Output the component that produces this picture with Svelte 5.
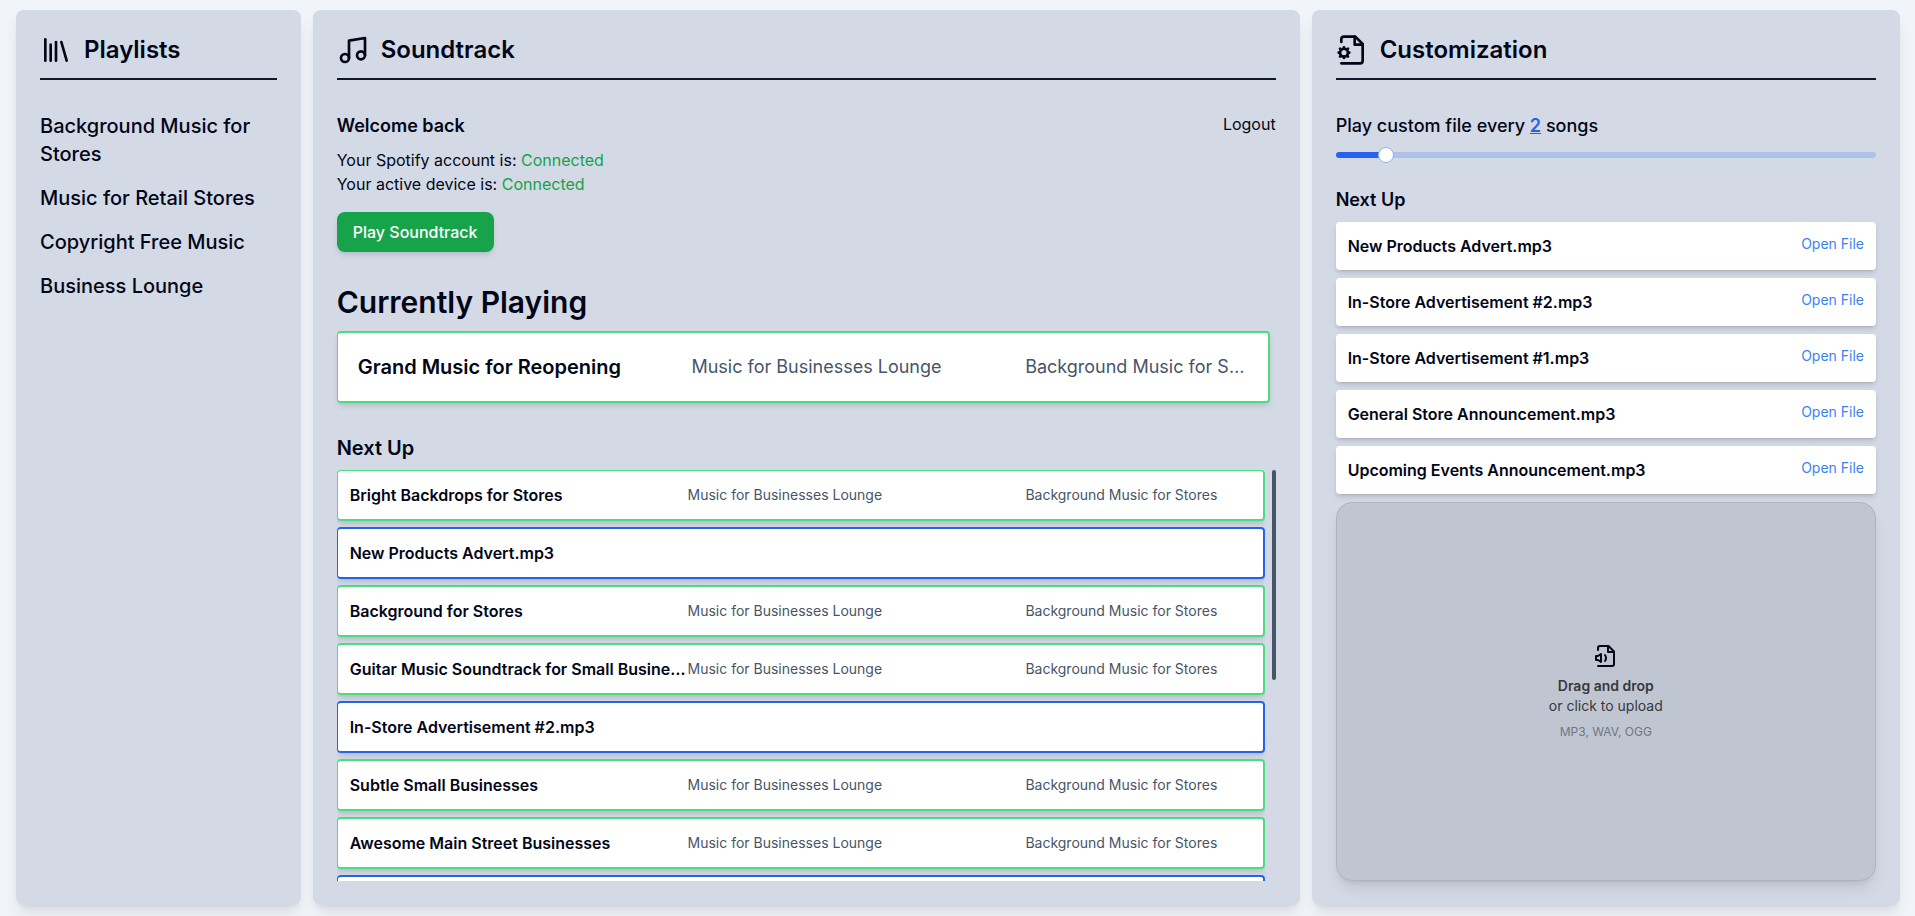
<script>
  const playlists = [
    'Background Music for Stores',
    'Music for Retail Stores',
    'Copyright Free Music',
    'Business Lounge'
  ];

  const artist = 'Music for Businesses Lounge';
  const album = 'Background Music for Stores';

  // custom entries are the uploaded files mixed into the soundtrack
  const queue = [
    { title: 'Bright Backdrops for Stores' },
    { title: 'New Products Advert.mp3', custom: true },
    { title: 'Background for Stores' },
    { title: 'Guitar Music Soundtrack for Small Businesses' },
    { title: 'In-Store Advertisement #2.mp3', custom: true },
    { title: 'Subtle Small Businesses' },
    { title: 'Awesome Main Street Businesses' },
    { title: '', custom: true }
  ];

  const files = [
    'New Products Advert.mp3',
    'In-Store Advertisement #2.mp3',
    'In-Store Advertisement #1.mp3',
    'General Store Announcement.mp3',
    'Upcoming Events Announcement.mp3'
  ];

  const max = 25;
  let every = $state(2);
  let fill = $derived((every / max) * 100);
</script>

<main>
  <section class="panel">
    <header>
      <svg class="icon" viewBox="0 0 24 24" aria-hidden="true">
        <path d="m16 6 4 14" />
        <path d="M12 6v14" />
        <path d="M8 8v12" />
        <path d="M4 4v16" />
      </svg>
      <h2>Playlists</h2>
    </header>
    <nav class="playlists">
      {#each playlists as playlist}
        <a href="#playlist">{playlist}</a>
      {/each}
    </nav>
  </section>

  <section class="panel">
    <header>
      <svg class="icon" viewBox="0 0 24 24" aria-hidden="true">
        <path d="M9 18V5l12-2v13" />
        <circle cx="6" cy="18" r="3" />
        <circle cx="18" cy="16" r="3" />
      </svg>
      <h2>Soundtrack</h2>
    </header>

    <div class="account">
      <div>
        <h3>Welcome back</h3>
        <p>Your Spotify account is: <span class="ok">Connected</span></p>
        <p>Your active device is: <span class="ok">Connected</span></p>
      </div>
      <button class="logout">Logout</button>
    </div>
    <button class="play">Play Soundtrack</button>

    <h1>Currently Playing</h1>
    <div class="track current">
      <span class="title">Grand Music for Reopening</span>
      <span class="meta">{artist}</span>
      <span class="meta">{album}</span>
    </div>

    <h2 class="queue-title">Next Up</h2>
    <div class="queue">
      <div class="queue-list">
        {#each queue as track}
          <div class="track" class:custom={track.custom}>
            <span class="title">{track.title}</span>
            {#if !track.custom}
              <span class="meta">{artist}</span>
              <span class="meta">{album}</span>
            {/if}
          </div>
        {/each}
      </div>
      <div class="thumb"></div>
    </div>
  </section>

  <section class="panel">
    <header>
      <svg class="icon" viewBox="0 0 24 24" aria-hidden="true">
        <path d="M4 6V4a2 2 0 0 1 2-2h8.500L20 7.500V20a2 2 0 0 1-2 2H4" />
        <path d="M14 2v6h6" />
        <circle cx="6" cy="14" r="3" />
        <path d="M6 10v1M6 17v1M10 14H9M3 14H2" />
        <path d="m9 11-.88.88M3.88 16.120 3 17M9 17l-.88-.88M3.880 11.880 3 11" />
      </svg>
      <h2>Customization</h2>
    </header>

    <label class="every" for="every">Play custom file every <span>{every}</span> songs</label>
    <input id="every" class="slider" type="range" min="0" {max} bind:value={every} style="--fill: {fill}%" />

    <h3 class="files-title">Next Up</h3>
    <ul class="files">
      {#each files as file}
        <li>
          <span>{file}</span>
          <a href="#file">Open File</a>
        </li>
      {/each}
    </ul>

    <button class="dropzone">
      <svg viewBox="0 0 24 24" aria-hidden="true">
        <path d="M4 6V4a2 2 0 0 1 2-2h8.500L20 7.500V20a2 2 0 0 1-2 2H4" />
        <path d="M14 2v6h6" />
        <path d="m7 10-3 2H2v4h2l3 2z" />
        <path d="M11 11c.64.8 1 1.870 1 3s-.36 2.200-1 3" />
      </svg>
      <strong>Drag and drop</strong>
      <span>or click to upload</span>
      <small>MP3, WAV, OGG</small>
    </button>
  </section>
</main>

<style>
  :global(body) {
    background: #f1f5f9;
    color: #020617;
    font-family: Inter, sans-serif;
    font-size: 16px;
    line-height: 24px;
  }
  main {
    display: grid;
    grid-template-columns: 15fr 52fr 31fr;
    gap: 12px;
    height: 100vh;
    padding: 10px 15px 11px 16px;
    box-sizing: border-box;
  }
  .panel {
    display: flex;
    flex-direction: column;
    min-width: 0;
    min-height: 0;
    padding: 24px;
    background: #d3dae6;
    border-radius: 8px;
    box-shadow: 0 10px 15px -3px rgba(0, 0, 0, 0.1), 0 4px 6px -4px rgba(0, 0, 0, 0.1);
  }
  header {
    display: flex;
    align-items: center;
    gap: 12px;
    padding-bottom: 12px;
    margin-bottom: 32px;
    border-bottom: 2px solid #0f172a;
  }
  h1,
  h2,
  h3,
  p,
  ul {
    margin: 0;
    padding: 0;
  }
  h1 {
    margin: 32px 0 11px;
    font-size: 30px;
    line-height: 36px;
    font-weight: 600;
  }
  h2 {
    font-size: 24px;
    line-height: 32px;
    font-weight: 600;
  }
  h3 {
    font-size: 18px;
    line-height: 28px;
    font-weight: 600;
  }
  a {
    color: inherit;
    text-decoration: none;
  }
  button {
    font: inherit;
    color: inherit;
    border: 0;
    cursor: pointer;
  }
  svg {
    fill: none;
    stroke: currentColor;
    stroke-width: 2;
    stroke-linecap: round;
    stroke-linejoin: round;
  }
  .icon {
    width: 32px;
    height: 32px;
  }
  .playlists {
    display: flex;
    flex-direction: column;
    gap: 16px;
    font-size: 20px;
    line-height: 28px;
    font-weight: 500;
  }
  .account {
    display: flex;
    justify-content: space-between;
    align-items: flex-start;
  }
  .account h3 {
    margin-bottom: 8px;
  }
  .ok {
    color: #16a34a;
  }
  .logout {
    padding: 0;
    background: none;
  }
  .play {
    align-self: flex-start;
    height: 40px;
    margin-top: 16px;
    padding: 0 16px;
    border-radius: 8px;
    background: #16a34a;
    color: #fff;
    font-weight: 500;
    box-shadow: 0 4px 6px -1px rgba(0, 0, 0, 0.1), 0 2px 4px -2px rgba(0, 0, 0, 0.1);
  }
  .track {
    display: grid;
    grid-template-columns: 3fr 3fr 2fr;
    align-items: center;
    flex-shrink: 0;
    height: 52px;
    box-sizing: border-box;
    padding: 0 12px;
    background: #fff;
    border: 2px solid #4ade80;
    border-left-width: 1px;
    border-radius: 4px;
    box-shadow: 0 4px 6px -1px rgba(0, 0, 0, 0.1), 0 2px 4px -2px rgba(0, 0, 0, 0.1);
  }
  .track.custom {
    border-color: #2563eb;
  }
  .track span {
    min-width: 0;
    overflow: hidden;
    text-overflow: ellipsis;
    white-space: nowrap;
  }
  .title {
    font-weight: 600;
  }
  .meta {
    color: #475569;
    font-size: 14px;
  }
  .current {
    height: 72px;
    margin-right: 6px;
    padding: 0 20px;
  }
  .current .title {
    font-size: 20px;
  }
  .current .meta {
    font-size: 18px;
  }
  .queue-title {
    margin: 31px 0 8px;
    font-size: 20px;
    line-height: 28px;
  }
  .queue {
    display: flex;
    gap: 7px;
    flex: 1;
    min-height: 0;
  }
  .queue-list {
    display: flex;
    flex-direction: column;
    gap: 6px;
    flex: 1;
    min-width: 0;
    overflow: hidden;
  }
  .queue-list .track:first-child {
    height: 51px;
    border-top-width: 1px;
  }
  .thumb {
    width: 4px;
    height: 51%;
    border-radius: 2px;
    background: #475569;
  }
  .every {
    font-size: 18px;
    line-height: 28px;
    font-weight: 500;
  }
  .every span {
    color: #2563eb;
    font-weight: 600;
    text-decoration: underline;
  }
  .slider {
    appearance: none;
    width: 100%;
    height: 16px;
    margin: 7px 0 23px;
    background: none;
  }
  .slider::-webkit-slider-runnable-track {
    height: 6px;
    border-radius: 3px;
    background: linear-gradient(to right, #2563eb var(--fill), #aec2e8 var(--fill));
  }
  .slider::-webkit-slider-thumb {
    appearance: none;
    width: 16px;
    height: 16px;
    margin-top: -5px;
    box-sizing: border-box;
    border: 1px solid #92b0f0;
    border-radius: 50%;
    background: #fff;
  }
  .files-title {
    margin-bottom: 8px;
  }
  .files {
    display: flex;
    flex-direction: column;
    gap: 8px;
    list-style: none;
  }
  .files li {
    display: flex;
    justify-content: space-between;
    padding: 12px;
    background: #fff;
    border-radius: 4px;
    font-weight: 600;
    box-shadow: 0 4px 6px -1px rgba(0, 0, 0, 0.1), 0 2px 4px -2px rgba(0, 0, 0, 0.2);
  }
  .files a {
    color: #3b82f6;
    font-size: 14px;
    line-height: 20px;
    font-weight: 400;
  }
  .dropzone {
    display: flex;
    flex-direction: column;
    align-items: center;
    justify-content: center;
    flex: 1;
    margin-top: 8px;
    border: 1px solid #adb4c1;
    border-radius: 16px;
    background: #bfc6d2;
    color: #37383e;
    font-size: 14px;
    line-height: 20px;
    box-shadow: 0 10px 15px -3px rgba(0, 0, 0, 0.1), 0 4px 6px -4px rgba(0, 0, 0, 0.1);
  }
  .dropzone svg {
    width: 24px;
    height: 24px;
    margin-bottom: 8px;
    color: #020617;
  }
  .dropzone strong {
    font-weight: 600;
  }
  .dropzone small {
    margin-top: 8px;
    color: #717680;
    font-size: 12px;
    line-height: 16px;
  }
</style>
